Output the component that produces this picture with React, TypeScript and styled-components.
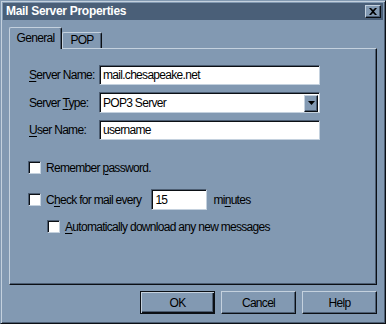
import React from 'react'
import styled, { createGlobalStyle } from 'styled-components'

const face = '#8299b2'
const light = '#c4d1de'
const shadow = '#4c5d72'
const dark = '#0b0f14'
const caption = '#4a5f78'

const GlobalStyle = createGlobalStyle`
  html, body {
    margin: 0;
    padding: 0;
    background: ${face};
  }
  * {
    box-sizing: border-box;
  }
`

const Window = styled.div`
  width: 386px;
  height: 324px;
  background: ${face};
  border: 1px solid;
  border-color: ${face} ${dark} ${dark} ${face};
  box-shadow: inset 1px 1px 0 ${light}, inset -1px -1px 0 ${shadow};
  padding: 2px;
  display: flex;
  flex-direction: column;
  font-family: 'Liberation Sans', Arial, sans-serif;
  font-size: 12px;
  letter-spacing: -0.7px;
  color: #000;
`

const TitleBar = styled.div`
  height: 17px;
  background: ${caption};
  display: flex;
  align-items: center;
  justify-content: space-between;
  padding: 0 2px 0 3px;
`

const TitleText = styled.span`
  font-weight: bold;
  font-size: 12px;
  letter-spacing: -0.3px;
  color: #fff;
  line-height: 17px;
`

const CloseButton = styled.div`
  width: 16px;
  height: 13px;
  background: ${face};
  border: 1px solid;
  border-color: ${light} ${dark} ${dark} ${light};
  box-shadow: inset -1px -1px 0 ${shadow};
  display: flex;
  align-items: center;
  justify-content: center;
`

const Body = styled.div`
  padding: 7px 6px 0 6px;
  display: flex;
  flex-direction: column;
`

const TabStrip = styled.div`
  height: 21px;
  display: flex;
  align-items: flex-end;
  position: relative;
  z-index: 1;
`

const Tab = styled.div<{ active?: boolean; w: number }>`
  width: ${({ w }) => w}px;
  height: ${({ active }) => (active ? 22 : 16)}px;
  margin-bottom: ${({ active }) => (active ? -1 : 0)}px;
  background: ${face};
  border-left: 1px solid ${light};
  border-top: 1px solid ${light};
  border-right: 1px solid ${dark};
  border-top-left-radius: 2px;
  border-top-right-radius: 2px;
  box-shadow: inset -1px 0 0 ${shadow};
  display: flex;
  align-items: ${({ active }) => (active ? 'flex-start' : 'center')};
  justify-content: center;
  padding-top: ${({ active }) => (active ? 3 : 0)}px;
  line-height: 15px;
`

const Panel = styled.div`
  height: 237px;
  border: 1px solid;
  border-color: ${light} ${dark} ${dark} ${light};
  box-shadow: inset -1px -1px 0 ${shadow};
  padding: 16px 0 0 18px;
  display: flex;
  flex-direction: column;
`

const FieldRow = styled.div<{ gap?: number }>`
  display: flex;
  align-items: center;
  margin-top: ${({ gap }) => gap ?? 0}px;
`

const FieldLabel = styled.span`
  width: 71px;
  padding-left: 1px;
  white-space: nowrap;
`

const Sunken = styled.div<{ w: number; h?: number }>`
  width: ${({ w }) => w}px;
  height: ${({ h }) => h ?? 20}px;
  background: #fff;
  border: 1px solid;
  border-color: ${shadow} ${light} ${light} ${shadow};
  box-shadow: inset 1px 1px 0 ${dark};
  display: flex;
  align-items: center;
  padding-left: 3px;
  white-space: nowrap;
  line-height: 16px;
`

const SelectBox = styled(Sunken)`
  padding-right: 1px;
  justify-content: space-between;
`

const DropButton = styled.div`
  width: 14px;
  height: 17px;
  margin-top: 1px;
  background: ${face};
  border: 1px solid;
  border-color: ${light} ${dark} ${dark} ${light};
  box-shadow: inset -1px -1px 0 ${shadow};
  display: flex;
  align-items: center;
  justify-content: center;
`

const CheckRow = styled.div<{ indent?: number; gap: number }>`
  display: flex;
  align-items: center;
  height: 21px;
  margin-top: ${({ gap }) => gap}px;
  padding-left: ${({ indent }) => indent ?? 0}px;
  white-space: nowrap;
`

const CheckBox = styled.div`
  width: 13px;
  height: 13px;
  background: #fff;
  border: 1px solid;
  border-color: ${shadow} ${light} ${light} ${shadow};
  box-shadow: inset 1px 1px 0 ${dark};
  margin-right: 5px;
  flex-shrink: 0;
`

const Caption = styled.span`
  white-space: pre;
`

const MinutesInput = styled(Sunken)`
  margin-left: 10px;
  margin-right: 6px;
`

const Key = styled.span`
  text-decoration: underline;
  text-underline-offset: 2px;
`

const ButtonRow = styled.div`
  display: flex;
  justify-content: flex-end;
  gap: 6px;
  margin-top: 6px;
`

const PushButton = styled.div<{ isDefault?: boolean }>`
  width: 75px;
  height: 23px;
  background: ${face};
  border: 1px solid;
  border-color: ${({ isDefault }) =>
    isDefault ? `${dark}` : `${light} ${dark} ${dark} ${light}`};
  box-shadow: ${({ isDefault }) =>
    isDefault
      ? `inset 1px 1px 0 ${light}, inset -1px -1px 0 ${dark}, inset -2px -2px 0 ${shadow}`
      : `inset -1px -1px 0 ${shadow}`};
  display: flex;
  align-items: center;
  justify-content: center;
`

const App: React.FC = () => {
  return (
    <>
      <GlobalStyle />
      <Window>
        <TitleBar>
          <TitleText>Mail Server Properties</TitleText>
          <CloseButton>
            <svg width="8" height="7" viewBox="0 0 8 7">
              <path d="M0 0h2l2 2 2-2h2L5 3.5 8 7H6L4 5 2 7H0l3-3.5z" fill="#000" />
            </svg>
          </CloseButton>
        </TitleBar>
        <Body>
          <TabStrip>
            <Tab active w={53}>General</Tab>
            <Tab w={40}>POP</Tab>
          </TabStrip>
          <Panel>
            <FieldRow>
              <FieldLabel>
                <Key>S</Key>erver Name:
              </FieldLabel>
              <Sunken w={221}>mail.chesapeake.net</Sunken>
            </FieldRow>
            <FieldRow gap={7}>
              <FieldLabel>
                Server <Key>T</Key>ype:
              </FieldLabel>
              <SelectBox w={221} h={21}>
                <Caption>POP3 Server</Caption>
                <DropButton>
                  <svg width="7" height="4" viewBox="0 0 7 4">
                    <path d="M0 0h7L3.5 4z" fill="#000" />
                  </svg>
                </DropButton>
              </SelectBox>
            </FieldRow>
            <FieldRow gap={7}>
              <FieldLabel>
                <Key>U</Key>ser Name:
              </FieldLabel>
              <Sunken w={221}>username</Sunken>
            </FieldRow>
            <CheckRow gap={17}>
              <CheckBox />
              <Caption>
                Remember <Key>p</Key>assword.
              </Caption>
            </CheckRow>
            <CheckRow gap={11}>
              <CheckBox />
              <Caption>
                C<Key>h</Key>eck for mail every
              </Caption>
              <MinutesInput w={56} h={21}>15</MinutesInput>
              <Caption>
                mi<Key>n</Key>utes
              </Caption>
            </CheckRow>
            <CheckRow gap={6} indent={19}>
              <CheckBox />
              <Caption>
                <Key>A</Key>utomatically download any new messages
              </Caption>
            </CheckRow>
          </Panel>
          <ButtonRow>
            <PushButton isDefault>OK</PushButton>
            <PushButton>Cancel</PushButton>
            <PushButton>Help</PushButton>
          </ButtonRow>
        </Body>
      </Window>
    </>
  )
}

export default App
